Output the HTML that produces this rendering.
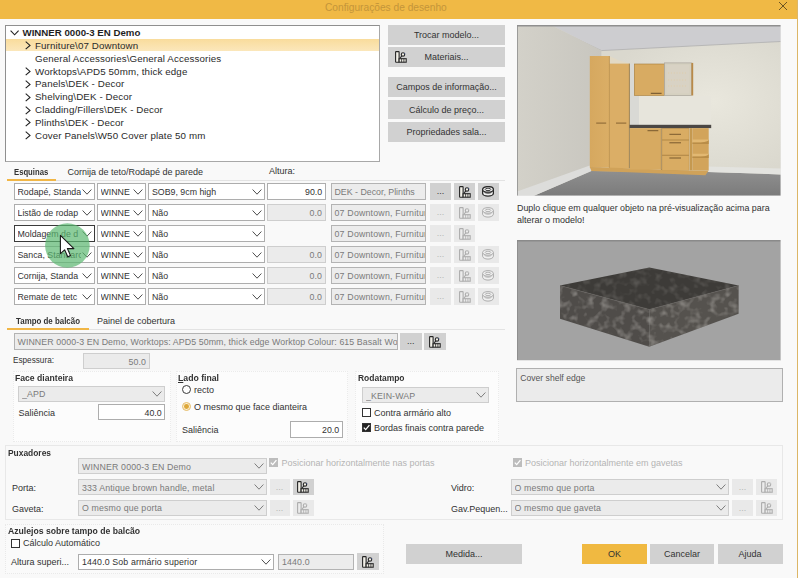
<!DOCTYPE html><html lang="pt"><head><meta charset="utf-8"><title>Configurações de desenho</title><style>
*{box-sizing:border-box;margin:0;padding:0}
html,body{width:798px;height:578px;overflow:hidden}
body{background:#f9f9f9;font-family:"Liberation Sans",sans-serif;font-size:9px;color:#323232;position:relative}
.a{position:absolute;white-space:nowrap}
.t{position:absolute;white-space:nowrap;line-height:12px;height:12px}
.b{font-weight:bold}
.g{color:#8a8a8a}
.btn{position:absolute;background:#d1d1d1;text-align:center;color:#333}
.btn.dis{background:#e9e9e9;color:#b5b5b5}
.btn.ok{background:#f0b941}
.cb{position:absolute;background:#fff;border:1px solid #adadad;overflow:hidden;white-space:nowrap}
.cb.dis{background:#ebebeb;border-color:#cecece;color:#7a7a7a}
.cb.ro{background:#ececec;border-color:#b3b3b3;color:#7a7a7a}
.cb.foc{border-color:#3a3a3a}
.cb.ls span{letter-spacing:0.2px}
.cb.ls2 span{letter-spacing:0.09px}
.cb.dis span{letter-spacing:0.14px}
.cb.w span{letter-spacing:0.14px}
.cb span{position:absolute;left:3px;top:0.8px;line-height:14px;font-size:8.8px}
.cb span.r{left:auto;right:2.4px}
.cb svg{position:absolute;right:2px}
.grp{position:absolute;background:#fcfcfc;border:1px dotted #ebebeb}
.chk{position:absolute;width:9px;height:9px;border:1px solid #333;background:#fff}
</style></head><body>
<div class="a" style="left:0;top:0;width:798px;height:18.5px;background:#f0b945"></div>
<div class="a" style="left:796.5px;top:0;width:1.5px;height:578px;background:#dcb667"></div>
<div class="t" style="left:325px;top:1.5px;font-size:10.2px;color:#c4953a">Configurações de desenho</div>
<svg class="a" style="left:778px;top:0.5px" width="10" height="10" viewBox="0 0 10 10"><path d="M1 1 L9 9 M9 1 L1 9" stroke="#5e4a1e" stroke-width="0.9" fill="none"/></svg>
<div class="a" style="left:5px;top:25px;width:375px;height:137px;background:#fff;border:1px solid #a8a8a8;border-top-color:#8f8f8f;border-left-color:#8f8f8f"></div>
<div class="a" style="left:6px;top:39.4px;width:373px;height:12px;background:linear-gradient(#f9dc9c,#fbe7bb)"></div>
<svg class="a" style="left:9.5px;top:29.8px" width="10" height="6" viewBox="0 0 10 6"><polyline points="0.6,0.6 4.6,4.8 8.6,0.6" fill="none" stroke="#222" stroke-width="1.1"/></svg>
<div class="t b" style="left:22.5px;top:27.0px;font-size:9.7px;color:#1f1f1f">WINNER 0000-3 EN Demo</div>
<svg class="a" style="left:24.5px;top:41.2px" width="6" height="9" viewBox="0 0 6 9"><polyline points="0.7,0.6 5,4.4 0.7,8.2" fill="none" stroke="#222" stroke-width="1.1"/></svg>
<div class="t " style="left:35px;top:39.9px;font-size:9.75px;color:#2a2a2a;letter-spacing:0.12px">Furniture\07 Downtown</div>
<div class="t " style="left:35px;top:52.7px;font-size:9.75px;color:#2a2a2a;letter-spacing:0.12px">General Accessories\General Accessories</div>
<svg class="a" style="left:24.5px;top:67.0px" width="6" height="9" viewBox="0 0 6 9"><polyline points="0.7,0.6 5,4.4 0.7,8.2" fill="none" stroke="#222" stroke-width="1.1"/></svg>
<div class="t " style="left:35px;top:65.6px;font-size:9.75px;color:#2a2a2a;letter-spacing:0.12px">Worktops\APD5 50mm, thick edge</div>
<svg class="a" style="left:24.5px;top:79.8px" width="6" height="9" viewBox="0 0 6 9"><polyline points="0.7,0.6 5,4.4 0.7,8.2" fill="none" stroke="#222" stroke-width="1.1"/></svg>
<div class="t " style="left:35px;top:78.4px;font-size:9.75px;color:#2a2a2a;letter-spacing:0.12px">Panels\DEK - Decor</div>
<svg class="a" style="left:24.5px;top:92.6px" width="6" height="9" viewBox="0 0 6 9"><polyline points="0.7,0.6 5,4.4 0.7,8.2" fill="none" stroke="#222" stroke-width="1.1"/></svg>
<div class="t " style="left:35px;top:91.2px;font-size:9.75px;color:#2a2a2a;letter-spacing:0.12px">Shelving\DEK - Decor</div>
<svg class="a" style="left:24.5px;top:105.5px" width="6" height="9" viewBox="0 0 6 9"><polyline points="0.7,0.6 5,4.4 0.7,8.2" fill="none" stroke="#222" stroke-width="1.1"/></svg>
<div class="t " style="left:35px;top:104.1px;font-size:9.75px;color:#2a2a2a;letter-spacing:0.12px">Cladding/Fillers\DEK - Decor</div>
<svg class="a" style="left:24.5px;top:118.4px" width="6" height="9" viewBox="0 0 6 9"><polyline points="0.7,0.6 5,4.4 0.7,8.2" fill="none" stroke="#222" stroke-width="1.1"/></svg>
<div class="t " style="left:35px;top:117.0px;font-size:9.75px;color:#2a2a2a;letter-spacing:0.12px">Plinths\DEK - Decor</div>
<svg class="a" style="left:24.5px;top:131.2px" width="6" height="9" viewBox="0 0 6 9"><polyline points="0.7,0.6 5,4.4 0.7,8.2" fill="none" stroke="#222" stroke-width="1.1"/></svg>
<div class="t " style="left:35px;top:129.8px;font-size:9.75px;color:#2a2a2a;letter-spacing:0.12px">Cover Panels\W50 Cover plate 50 mm</div>
<div class="btn " style="left:388px;top:25px;width:117px;height:19.5px;line-height:20.9px">Trocar modelo...</div>
<div class="btn " style="left:388px;top:47px;width:117px;height:19.5px;line-height:20.9px">Materiais...</div>
<svg class="a" style="left:394.5px;top:51px" width="12" height="12" viewBox="0 0 12 12"><rect x="0.6" y="0.6" width="3.5" height="10.6" rx="0.5" fill="#f2f0e8" stroke="#262626" stroke-width="1.1"/><rect x="4.1" y="7.7" width="7.1" height="3.5" fill="#f2f0e8" stroke="#262626" stroke-width="1.1"/><path d="M6.6 7.7 V11.2 M8.9 7.7 V11.2" stroke="#262626" stroke-width="0.8" fill="none"/><circle cx="8" cy="3.5" r="1.7" fill="#f2f0e8" stroke="#262626" stroke-width="1.1"/><path d="M6.9 4.9 L4.7 7.5" stroke="#262626" stroke-width="1.1" fill="none"/><circle cx="9.6" cy="2.6" r="0.7" fill="#3c4a78"/></svg>
<div class="btn " style="left:388px;top:77px;width:117px;height:19.5px;line-height:20.9px">Campos de informação...</div>
<div class="btn " style="left:388px;top:99.5px;width:117px;height:19.5px;line-height:20.9px">Cálculo de preço...</div>
<div class="btn " style="left:388px;top:122px;width:117px;height:19.5px;line-height:20.9px">Propriedades sala...</div>
<div class="t b" style="left:13.8px;top:166.4px;transform:scaleX(0.855);transform-origin:0 50%;">Esquinas</div>
<div class="t " style="left:67.5px;top:166.4px;">Cornija de teto/Rodapé de parede</div>
<div class="t " style="left:269px;top:164.9px;">Altura:</div>
<div class="a" style="left:55px;top:180px;width:450px;height:1px;background:#e3e3e3"></div>
<div class="a" style="left:7px;top:179px;width:48.5px;height:1.8px;background:#f1b646"></div>
<div class="cb " style="left:13.5px;top:183.4px;width:81.0px;height:16.2px"><span class="" style="line-height:14.2px;right:13px;overflow:hidden;">Rodapé, Standa</span><svg width="10" height="6" viewBox="0 0 10 6" style="top:4.5px"><polyline points="0.6,0.5 5,5.2 9.4,0.5" fill="none" stroke="#444" stroke-width="0.95"/></svg></div>
<div class="cb " style="left:96.5px;top:183.4px;width:49.0px;height:16.2px"><span class="" style="line-height:14.2px;right:13px;overflow:hidden;">WINNE</span><svg width="10" height="6" viewBox="0 0 10 6" style="top:4.5px"><polyline points="0.6,0.5 5,5.2 9.4,0.5" fill="none" stroke="#444" stroke-width="0.95"/></svg></div>
<div class="cb " style="left:148px;top:183.4px;width:116.5px;height:16.2px"><span class="" style="line-height:14.2px;right:13px;overflow:hidden;">SOB9, 9cm high</span><svg width="10" height="6" viewBox="0 0 10 6" style="top:4.5px"><polyline points="0.6,0.5 5,5.2 9.4,0.5" fill="none" stroke="#444" stroke-width="0.95"/></svg></div>
<div class="cb " style="left:266.5px;top:183.4px;width:59.0px;height:16.2px"><span class="r" style="line-height:14.2px;">90.0</span></div>
<div class="cb ro" style="left:330.5px;top:183.4px;width:95.0px;height:16.2px"><span class="" style="line-height:14.2px;">DEK - Decor, Plinths</span></div>
<div class="btn " style="left:430px;top:183.4px;width:21px;height:16.19999999999999px;line-height:17.6px">...</div>
<div class="btn " style="left:454px;top:183.4px;width:21px;height:16.19999999999999px"></div>
<svg class="a" style="left:458.7px;top:185.9px" width="12" height="12" viewBox="0 0 12 12"><rect x="0.6" y="0.6" width="3.5" height="10.6" rx="0.5" fill="#f2f0e8" stroke="#262626" stroke-width="1.1"/><rect x="4.1" y="7.7" width="7.1" height="3.5" fill="#f2f0e8" stroke="#262626" stroke-width="1.1"/><path d="M6.6 7.7 V11.2 M8.9 7.7 V11.2" stroke="#262626" stroke-width="0.8" fill="none"/><circle cx="8" cy="3.5" r="1.7" fill="#f2f0e8" stroke="#262626" stroke-width="1.1"/><path d="M6.9 4.9 L4.7 7.5" stroke="#262626" stroke-width="1.1" fill="none"/><circle cx="9.6" cy="2.6" r="0.7" fill="#3c4a78"/></svg>
<div class="btn " style="left:477.5px;top:183.4px;width:21.5px;height:16.19999999999999px"></div>
<svg class="a" style="left:482.2px;top:186.1px" width="12" height="11" viewBox="0 0 12 11"><path d="M0.6 3.4 V7.2 A5.4 2.9 0 0 0 11.4 7.2 V3.4" fill="#f0f0f0" stroke="#2a2a2a" stroke-width="1.3"/><ellipse cx="6" cy="3.4" rx="5.4" ry="2.8" fill="#f0f0f0" stroke="#2a2a2a" stroke-width="1.3"/><ellipse cx="6" cy="3.4" rx="2.8" ry="1.2" fill="none" stroke="#2a2a2a" stroke-width="0.9"/><path d="M2.4 6.1 A3.8 1.6 0 0 0 9.6 6.1" fill="none" stroke="#2a2a2a" stroke-width="0.9"/></svg>
<div class="cb " style="left:13.5px;top:204.4px;width:81.0px;height:16.2px"><span class="" style="line-height:14.2px;right:13px;overflow:hidden;">Listão de rodap</span><svg width="10" height="6" viewBox="0 0 10 6" style="top:4.5px"><polyline points="0.6,0.5 5,5.2 9.4,0.5" fill="none" stroke="#444" stroke-width="0.95"/></svg></div>
<div class="cb " style="left:96.5px;top:204.4px;width:49.0px;height:16.2px"><span class="" style="line-height:14.2px;right:13px;overflow:hidden;">WINNE</span><svg width="10" height="6" viewBox="0 0 10 6" style="top:4.5px"><polyline points="0.6,0.5 5,5.2 9.4,0.5" fill="none" stroke="#444" stroke-width="0.95"/></svg></div>
<div class="cb " style="left:148px;top:204.4px;width:116.5px;height:16.2px"><span class="" style="line-height:14.2px;right:13px;overflow:hidden;">Não</span><svg width="10" height="6" viewBox="0 0 10 6" style="top:4.5px"><polyline points="0.6,0.5 5,5.2 9.4,0.5" fill="none" stroke="#444" stroke-width="0.95"/></svg></div>
<div class="cb dis" style="left:266.5px;top:204.4px;width:59.0px;height:16.2px"><span class="r" style="line-height:14.2px;">0.0</span></div>
<div class="cb ro ls" style="left:330.5px;top:204.4px;width:95.0px;height:16.2px"><span class="" style="line-height:14.2px;">07 Downtown, Furniture</span></div>
<div class="btn dis" style="left:430px;top:204.4px;width:21px;height:16.19999999999999px;line-height:17.6px">...</div>
<div class="btn dis" style="left:454px;top:204.4px;width:21px;height:16.19999999999999px"></div>
<svg class="a" style="left:458.7px;top:206.9px" width="12" height="12" viewBox="0 0 12 12"><rect x="0.6" y="0.6" width="3.5" height="10.6" rx="0.5" fill="#ececec" stroke="#adadad" stroke-width="1.1"/><rect x="4.1" y="7.7" width="7.1" height="3.5" fill="#ececec" stroke="#adadad" stroke-width="1.1"/><path d="M6.6 7.7 V11.2 M8.9 7.7 V11.2" stroke="#adadad" stroke-width="0.8" fill="none"/><circle cx="8" cy="3.5" r="1.7" fill="#ececec" stroke="#adadad" stroke-width="1.1"/><path d="M6.9 4.9 L4.7 7.5" stroke="#adadad" stroke-width="1.1" fill="none"/><circle cx="9.6" cy="2.6" r="0.7" fill="#c4c4c4"/></svg>
<div class="btn dis" style="left:477.5px;top:204.4px;width:21.5px;height:16.19999999999999px"></div>
<svg class="a" style="left:482.2px;top:207.1px" width="12" height="11" viewBox="0 0 12 11"><path d="M0.6 3.4 V7.2 A5.4 2.9 0 0 0 11.4 7.2 V3.4" fill="#f0f0f0" stroke="#adadad" stroke-width="1"/><ellipse cx="6" cy="3.4" rx="5.4" ry="2.8" fill="#f0f0f0" stroke="#adadad" stroke-width="1"/><ellipse cx="6" cy="3.4" rx="2.8" ry="1.2" fill="none" stroke="#adadad" stroke-width="0.9"/><path d="M2.4 6.1 A3.8 1.6 0 0 0 9.6 6.1" fill="none" stroke="#adadad" stroke-width="0.9"/></svg>
<div class="cb foc" style="left:13.5px;top:225.4px;width:81.0px;height:16.2px"><span class="" style="line-height:14.2px;right:13px;overflow:hidden;">Moldagem de d</span><svg width="10" height="6" viewBox="0 0 10 6" style="top:4.5px"><polyline points="0.6,0.5 5,5.2 9.4,0.5" fill="none" stroke="#444" stroke-width="0.95"/></svg></div>
<div class="cb " style="left:96.5px;top:225.4px;width:49.0px;height:16.2px"><span class="" style="line-height:14.2px;right:13px;overflow:hidden;">WINNE</span><svg width="10" height="6" viewBox="0 0 10 6" style="top:4.5px"><polyline points="0.6,0.5 5,5.2 9.4,0.5" fill="none" stroke="#444" stroke-width="0.95"/></svg></div>
<div class="cb " style="left:148px;top:225.4px;width:116.5px;height:16.2px"><span class="" style="line-height:14.2px;right:13px;overflow:hidden;">Não</span><svg width="10" height="6" viewBox="0 0 10 6" style="top:4.5px"><polyline points="0.6,0.5 5,5.2 9.4,0.5" fill="none" stroke="#444" stroke-width="0.95"/></svg></div>
<div class="cb ro ls" style="left:330.5px;top:225.4px;width:95.0px;height:16.2px"><span class="" style="line-height:14.2px;">07 Downtown, Furniture</span></div>
<div class="btn dis" style="left:430px;top:225.4px;width:21px;height:16.19999999999999px;line-height:17.6px">...</div>
<div class="btn dis" style="left:454px;top:225.4px;width:21px;height:16.19999999999999px"></div>
<svg class="a" style="left:458.7px;top:227.9px" width="12" height="12" viewBox="0 0 12 12"><rect x="0.6" y="0.6" width="3.5" height="10.6" rx="0.5" fill="#ececec" stroke="#adadad" stroke-width="1.1"/><rect x="4.1" y="7.7" width="7.1" height="3.5" fill="#ececec" stroke="#adadad" stroke-width="1.1"/><path d="M6.6 7.7 V11.2 M8.9 7.7 V11.2" stroke="#adadad" stroke-width="0.8" fill="none"/><circle cx="8" cy="3.5" r="1.7" fill="#ececec" stroke="#adadad" stroke-width="1.1"/><path d="M6.9 4.9 L4.7 7.5" stroke="#adadad" stroke-width="1.1" fill="none"/><circle cx="9.6" cy="2.6" r="0.7" fill="#c4c4c4"/></svg>
<div class="cb " style="left:13.5px;top:246.4px;width:81.0px;height:16.2px"><span class="" style="line-height:14.2px;right:13px;overflow:hidden;">Sanca, Standarc</span><svg width="10" height="6" viewBox="0 0 10 6" style="top:4.5px"><polyline points="0.6,0.5 5,5.2 9.4,0.5" fill="none" stroke="#444" stroke-width="0.95"/></svg></div>
<div class="cb " style="left:96.5px;top:246.4px;width:49.0px;height:16.2px"><span class="" style="line-height:14.2px;right:13px;overflow:hidden;">WINNE</span><svg width="10" height="6" viewBox="0 0 10 6" style="top:4.5px"><polyline points="0.6,0.5 5,5.2 9.4,0.5" fill="none" stroke="#444" stroke-width="0.95"/></svg></div>
<div class="cb " style="left:148px;top:246.4px;width:116.5px;height:16.2px"><span class="" style="line-height:14.2px;right:13px;overflow:hidden;">Não</span><svg width="10" height="6" viewBox="0 0 10 6" style="top:4.5px"><polyline points="0.6,0.5 5,5.2 9.4,0.5" fill="none" stroke="#444" stroke-width="0.95"/></svg></div>
<div class="cb dis" style="left:266.5px;top:246.4px;width:59.0px;height:16.2px"><span class="r" style="line-height:14.2px;">0.0</span></div>
<div class="cb ro ls" style="left:330.5px;top:246.4px;width:95.0px;height:16.2px"><span class="" style="line-height:14.2px;">07 Downtown, Furniture</span></div>
<div class="btn dis" style="left:430px;top:246.4px;width:21px;height:16.200000000000017px;line-height:17.6px">...</div>
<div class="btn dis" style="left:454px;top:246.4px;width:21px;height:16.200000000000017px"></div>
<svg class="a" style="left:458.7px;top:248.9px" width="12" height="12" viewBox="0 0 12 12"><rect x="0.6" y="0.6" width="3.5" height="10.6" rx="0.5" fill="#ececec" stroke="#adadad" stroke-width="1.1"/><rect x="4.1" y="7.7" width="7.1" height="3.5" fill="#ececec" stroke="#adadad" stroke-width="1.1"/><path d="M6.6 7.7 V11.2 M8.9 7.7 V11.2" stroke="#adadad" stroke-width="0.8" fill="none"/><circle cx="8" cy="3.5" r="1.7" fill="#ececec" stroke="#adadad" stroke-width="1.1"/><path d="M6.9 4.9 L4.7 7.5" stroke="#adadad" stroke-width="1.1" fill="none"/><circle cx="9.6" cy="2.6" r="0.7" fill="#c4c4c4"/></svg>
<div class="btn dis" style="left:477.5px;top:246.4px;width:21.5px;height:16.200000000000017px"></div>
<svg class="a" style="left:482.2px;top:249.1px" width="12" height="11" viewBox="0 0 12 11"><path d="M0.6 3.4 V7.2 A5.4 2.9 0 0 0 11.4 7.2 V3.4" fill="#f0f0f0" stroke="#adadad" stroke-width="1"/><ellipse cx="6" cy="3.4" rx="5.4" ry="2.8" fill="#f0f0f0" stroke="#adadad" stroke-width="1"/><ellipse cx="6" cy="3.4" rx="2.8" ry="1.2" fill="none" stroke="#adadad" stroke-width="0.9"/><path d="M2.4 6.1 A3.8 1.6 0 0 0 9.6 6.1" fill="none" stroke="#adadad" stroke-width="0.9"/></svg>
<div class="cb " style="left:13.5px;top:267.4px;width:81.0px;height:16.2px"><span class="" style="line-height:14.2px;right:13px;overflow:hidden;">Cornija, Standa</span><svg width="10" height="6" viewBox="0 0 10 6" style="top:4.5px"><polyline points="0.6,0.5 5,5.2 9.4,0.5" fill="none" stroke="#444" stroke-width="0.95"/></svg></div>
<div class="cb " style="left:96.5px;top:267.4px;width:49.0px;height:16.2px"><span class="" style="line-height:14.2px;right:13px;overflow:hidden;">WINNE</span><svg width="10" height="6" viewBox="0 0 10 6" style="top:4.5px"><polyline points="0.6,0.5 5,5.2 9.4,0.5" fill="none" stroke="#444" stroke-width="0.95"/></svg></div>
<div class="cb " style="left:148px;top:267.4px;width:116.5px;height:16.2px"><span class="" style="line-height:14.2px;right:13px;overflow:hidden;">Não</span><svg width="10" height="6" viewBox="0 0 10 6" style="top:4.5px"><polyline points="0.6,0.5 5,5.2 9.4,0.5" fill="none" stroke="#444" stroke-width="0.95"/></svg></div>
<div class="cb dis" style="left:266.5px;top:267.4px;width:59.0px;height:16.2px"><span class="r" style="line-height:14.2px;">0.0</span></div>
<div class="cb ro ls" style="left:330.5px;top:267.4px;width:95.0px;height:16.2px"><span class="" style="line-height:14.2px;">07 Downtown, Furniture</span></div>
<div class="btn dis" style="left:430px;top:267.4px;width:21px;height:16.19999999999999px;line-height:17.6px">...</div>
<div class="btn dis" style="left:454px;top:267.4px;width:21px;height:16.19999999999999px"></div>
<svg class="a" style="left:458.7px;top:269.9px" width="12" height="12" viewBox="0 0 12 12"><rect x="0.6" y="0.6" width="3.5" height="10.6" rx="0.5" fill="#ececec" stroke="#adadad" stroke-width="1.1"/><rect x="4.1" y="7.7" width="7.1" height="3.5" fill="#ececec" stroke="#adadad" stroke-width="1.1"/><path d="M6.6 7.7 V11.2 M8.9 7.7 V11.2" stroke="#adadad" stroke-width="0.8" fill="none"/><circle cx="8" cy="3.5" r="1.7" fill="#ececec" stroke="#adadad" stroke-width="1.1"/><path d="M6.9 4.9 L4.7 7.5" stroke="#adadad" stroke-width="1.1" fill="none"/><circle cx="9.6" cy="2.6" r="0.7" fill="#c4c4c4"/></svg>
<div class="btn dis" style="left:477.5px;top:267.4px;width:21.5px;height:16.19999999999999px"></div>
<svg class="a" style="left:482.2px;top:270.1px" width="12" height="11" viewBox="0 0 12 11"><path d="M0.6 3.4 V7.2 A5.4 2.9 0 0 0 11.4 7.2 V3.4" fill="#f0f0f0" stroke="#adadad" stroke-width="1"/><ellipse cx="6" cy="3.4" rx="5.4" ry="2.8" fill="#f0f0f0" stroke="#adadad" stroke-width="1"/><ellipse cx="6" cy="3.4" rx="2.8" ry="1.2" fill="none" stroke="#adadad" stroke-width="0.9"/><path d="M2.4 6.1 A3.8 1.6 0 0 0 9.6 6.1" fill="none" stroke="#adadad" stroke-width="0.9"/></svg>
<div class="cb " style="left:13.5px;top:288.4px;width:81.0px;height:16.2px"><span class="" style="line-height:14.2px;right:13px;overflow:hidden;">Remate de tetc</span><svg width="10" height="6" viewBox="0 0 10 6" style="top:4.5px"><polyline points="0.6,0.5 5,5.2 9.4,0.5" fill="none" stroke="#444" stroke-width="0.95"/></svg></div>
<div class="cb " style="left:96.5px;top:288.4px;width:49.0px;height:16.2px"><span class="" style="line-height:14.2px;right:13px;overflow:hidden;">WINNE</span><svg width="10" height="6" viewBox="0 0 10 6" style="top:4.5px"><polyline points="0.6,0.5 5,5.2 9.4,0.5" fill="none" stroke="#444" stroke-width="0.95"/></svg></div>
<div class="cb " style="left:148px;top:288.4px;width:116.5px;height:16.2px"><span class="" style="line-height:14.2px;right:13px;overflow:hidden;">Não</span><svg width="10" height="6" viewBox="0 0 10 6" style="top:4.5px"><polyline points="0.6,0.5 5,5.2 9.4,0.5" fill="none" stroke="#444" stroke-width="0.95"/></svg></div>
<div class="cb dis" style="left:266.5px;top:288.4px;width:59.0px;height:16.2px"><span class="r" style="line-height:14.2px;">0.0</span></div>
<div class="cb ro ls" style="left:330.5px;top:288.4px;width:95.0px;height:16.2px"><span class="" style="line-height:14.2px;">07 Downtown, Furniture</span></div>
<div class="btn dis" style="left:430px;top:288.4px;width:21px;height:16.19999999999999px;line-height:17.6px">...</div>
<div class="btn dis" style="left:454px;top:288.4px;width:21px;height:16.19999999999999px"></div>
<svg class="a" style="left:458.7px;top:290.9px" width="12" height="12" viewBox="0 0 12 12"><rect x="0.6" y="0.6" width="3.5" height="10.6" rx="0.5" fill="#ececec" stroke="#adadad" stroke-width="1.1"/><rect x="4.1" y="7.7" width="7.1" height="3.5" fill="#ececec" stroke="#adadad" stroke-width="1.1"/><path d="M6.6 7.7 V11.2 M8.9 7.7 V11.2" stroke="#adadad" stroke-width="0.8" fill="none"/><circle cx="8" cy="3.5" r="1.7" fill="#ececec" stroke="#adadad" stroke-width="1.1"/><path d="M6.9 4.9 L4.7 7.5" stroke="#adadad" stroke-width="1.1" fill="none"/><circle cx="9.6" cy="2.6" r="0.7" fill="#c4c4c4"/></svg>
<div class="btn dis" style="left:477.5px;top:288.4px;width:21.5px;height:16.19999999999999px"></div>
<svg class="a" style="left:482.2px;top:291.1px" width="12" height="11" viewBox="0 0 12 11"><path d="M0.6 3.4 V7.2 A5.4 2.9 0 0 0 11.4 7.2 V3.4" fill="#f0f0f0" stroke="#adadad" stroke-width="1"/><ellipse cx="6" cy="3.4" rx="5.4" ry="2.8" fill="#f0f0f0" stroke="#adadad" stroke-width="1"/><ellipse cx="6" cy="3.4" rx="2.8" ry="1.2" fill="none" stroke="#adadad" stroke-width="0.9"/><path d="M2.4 6.1 A3.8 1.6 0 0 0 9.6 6.1" fill="none" stroke="#adadad" stroke-width="0.9"/></svg>
<div class="t b" style="left:15.5px;top:315.4px;transform:scaleX(0.878);transform-origin:0 50%;">Tampo de balcão</div>
<div class="t " style="left:97px;top:315.4px;">Painel de cobertura</div>
<div class="a" style="left:88px;top:329px;width:417px;height:1px;background:#e3e3e3"></div>
<div class="a" style="left:7px;top:328px;width:81.5px;height:1.8px;background:#f1b646"></div>
<div class="cb ro ls2" style="left:13.5px;top:333px;width:384.5px;height:16.5px"><span class="" style="line-height:14.5px;">WINNER 0000-3 EN Demo, Worktops: APD5 50mm, thick edge Worktop Colour: 615 Basalt Worktop</span></div>
<div class="btn " style="left:400px;top:333px;width:21.69999999999999px;height:16.5px;line-height:17.9px">...</div>
<div class="btn " style="left:424px;top:333px;width:21.80000000000001px;height:16.5px"></div>
<svg class="a" style="left:429.1px;top:335.6px" width="12" height="12" viewBox="0 0 12 12"><rect x="0.6" y="0.6" width="3.5" height="10.6" rx="0.5" fill="#f2f0e8" stroke="#262626" stroke-width="1.1"/><rect x="4.1" y="7.7" width="7.1" height="3.5" fill="#f2f0e8" stroke="#262626" stroke-width="1.1"/><path d="M6.6 7.7 V11.2 M8.9 7.7 V11.2" stroke="#262626" stroke-width="0.8" fill="none"/><circle cx="8" cy="3.5" r="1.7" fill="#f2f0e8" stroke="#262626" stroke-width="1.1"/><path d="M6.9 4.9 L4.7 7.5" stroke="#262626" stroke-width="1.1" fill="none"/><circle cx="9.6" cy="2.6" r="0.7" fill="#3c4a78"/></svg>
<div class="t " style="left:13px;top:355.0px;font-size:8.2px">Espessura:</div>
<div class="cb dis" style="left:83px;top:353px;width:66.5px;height:16px"><span class="r" style="line-height:14px;">50.0</span></div>
<div class="grp" style="left:13px;top:371px;width:157.5px;height:70.5px"></div>
<div class="grp" style="left:176px;top:371px;width:171.5px;height:70.5px"></div>
<div class="grp" style="left:354.5px;top:371px;width:144px;height:70.5px"></div>
<div class="t b" style="left:14.5px;top:372.4px;transform:scaleX(0.958);transform-origin:0 50%;">Face dianteira</div>
<div class="cb dis" style="left:18px;top:385.5px;width:146.5px;height:16.0px"><span class="" style="line-height:14.0px;right:13px;overflow:hidden;">_APD</span><svg width="10" height="6" viewBox="0 0 10 6" style="top:4.4px"><polyline points="0.6,0.5 5,5.2 9.4,0.5" fill="none" stroke="#777" stroke-width="0.95"/></svg></div>
<div class="t " style="left:18.5px;top:407.4px;">Saliência</div>
<div class="cb " style="left:98px;top:404px;width:67px;height:16px"><span class="r" style="line-height:14px;">40.0</span></div>
<div class="t b" style="left:178px;top:372.4px;transform:scaleX(0.965);transform-origin:0 50%"><span style="text-decoration:underline">L</span>ado final</div>
<div class="a" style="left:181.6px;top:384.8px;width:9.6px;height:9.6px;border:1px solid #3a3a3a;border-radius:50%;background:#fff"></div>
<div class="t " style="left:194px;top:383.9px;">recto</div>
<div class="a" style="left:181.6px;top:401.8px;width:9.6px;height:9.6px;border:1px solid #e6bd6a;border-radius:50%;background:#fcefd3"></div>
<div class="a" style="left:184px;top:404.2px;width:4.8px;height:4.8px;border-radius:50%;background:#dda83a"></div>
<div class="t " style="left:194px;top:400.9px;">O mesmo que face dianteira</div>
<div class="t " style="left:182px;top:423.9px;">Saliência</div>
<div class="cb " style="left:289.5px;top:421px;width:53.0px;height:16.5px"><span class="r" style="line-height:14.5px;">20.0</span></div>
<div class="t b" style="left:357.5px;top:372.4px;transform:scaleX(0.94);transform-origin:0 50%;">Rodatampo</div>
<div class="cb dis" style="left:362px;top:387px;width:126.5px;height:16px"><span class="" style="line-height:14px;right:13px;overflow:hidden;">_KEIN-WAP</span><svg width="10" height="6" viewBox="0 0 10 6" style="top:4.4px"><polyline points="0.6,0.5 5,5.2 9.4,0.5" fill="none" stroke="#777" stroke-width="0.95"/></svg></div>
<div class="chk" style="left:362px;top:408px"></div>
<div class="t " style="left:374px;top:406.9px;">Contra armário alto</div>
<div class="chk" style="left:362px;top:423px;background:#222"></div>
<svg class="a" style="left:362px;top:423px" width="9" height="9" viewBox="0 0 9 9"><polyline points="1.8,4.6 3.7,6.6 7.4,2.2" fill="none" stroke="#fff" stroke-width="1.3"/></svg>
<div class="t " style="left:374px;top:422.2px;">Bordas finais contra parede</div>
<div class="a" style="left:516px;top:367.8px;width:267px;height:34px;background:#ebebeb;border:1px solid #b0b0b0"></div>
<div class="t " style="left:520.3px;top:372.0px;color:#555;font-size:8.6px">Cover shelf edge</div>
<div class="a" style="left:5px;top:444.5px;width:777.5px;height:75.5px;border:1px solid #e8e8e8;background:#f9f9f9"></div>
<div class="t b" style="left:7.5px;top:446.9px;transform:scaleX(0.934);transform-origin:0 50%;">Puxadores</div>
<div class="cb dis" style="left:78px;top:458px;width:188.5px;height:16px"><span class="" style="line-height:14px;right:13px;overflow:hidden;">WINNER 0000-3 EN Demo</span><svg width="10" height="6" viewBox="0 0 10 6" style="top:4.4px"><polyline points="0.6,0.5 5,5.2 9.4,0.5" fill="none" stroke="#777" stroke-width="0.95"/></svg></div>
<div class="a" style="left:269px;top:458px;width:9px;height:9px;background:#bdbdbd"></div>
<svg class="a" style="left:269px;top:458px" width="9" height="9" viewBox="0 0 9 9"><polyline points="1.8,4.6 3.7,6.6 7.4,2.2" fill="none" stroke="#fff" stroke-width="1.3"/></svg>
<div class="t " style="left:281.5px;top:456.9px;color:#b4b4b4">Posicionar horizontalmente nas portas</div>
<div class="a" style="left:512.5px;top:458px;width:9px;height:9px;background:#bdbdbd"></div>
<svg class="a" style="left:512.5px;top:458px" width="9" height="9" viewBox="0 0 9 9"><polyline points="1.8,4.6 3.7,6.6 7.4,2.2" fill="none" stroke="#fff" stroke-width="1.3"/></svg>
<div class="t " style="left:525px;top:456.9px;color:#b4b4b4">Posicionar horizontalmente em gavetas</div>
<div class="t " style="left:12px;top:482.4px;">Porta:</div>
<div class="cb dis" style="left:78px;top:479px;width:188.5px;height:16px"><span class="" style="line-height:14px;right:13px;overflow:hidden;">333 Antique brown handle, metal</span><svg width="10" height="6" viewBox="0 0 10 6" style="top:4.4px"><polyline points="0.6,0.5 5,5.2 9.4,0.5" fill="none" stroke="#777" stroke-width="0.95"/></svg></div>
<div class="btn dis" style="left:269.5px;top:479px;width:20.0px;height:16px;line-height:17.4px">...</div>
<div class="btn " style="left:292.5px;top:479px;width:21.5px;height:16px"></div>
<svg class="a" style="left:297.4px;top:481.4px" width="12" height="12" viewBox="0 0 12 12"><rect x="0.6" y="0.6" width="3.5" height="10.6" rx="0.5" fill="#f2f0e8" stroke="#262626" stroke-width="1.1"/><rect x="4.1" y="7.7" width="7.1" height="3.5" fill="#f2f0e8" stroke="#262626" stroke-width="1.1"/><path d="M6.6 7.7 V11.2 M8.9 7.7 V11.2" stroke="#262626" stroke-width="0.8" fill="none"/><circle cx="8" cy="3.5" r="1.7" fill="#f2f0e8" stroke="#262626" stroke-width="1.1"/><path d="M6.9 4.9 L4.7 7.5" stroke="#262626" stroke-width="1.1" fill="none"/><circle cx="9.6" cy="2.6" r="0.7" fill="#3c4a78"/></svg>
<div class="t " style="left:12px;top:502.9px;">Gaveta:</div>
<div class="cb dis" style="left:78px;top:499.5px;width:188.5px;height:16.0px"><span class="" style="line-height:14.0px;right:13px;overflow:hidden;">O mesmo que porta</span><svg width="10" height="6" viewBox="0 0 10 6" style="top:4.4px"><polyline points="0.6,0.5 5,5.2 9.4,0.5" fill="none" stroke="#777" stroke-width="0.95"/></svg></div>
<div class="btn dis" style="left:269.5px;top:499.5px;width:20.0px;height:16.0px;line-height:17.4px">...</div>
<div class="btn dis" style="left:292.5px;top:499.5px;width:21.5px;height:16.0px"></div>
<svg class="a" style="left:297.4px;top:501.9px" width="12" height="12" viewBox="0 0 12 12"><rect x="0.6" y="0.6" width="3.5" height="10.6" rx="0.5" fill="#ececec" stroke="#adadad" stroke-width="1.1"/><rect x="4.1" y="7.7" width="7.1" height="3.5" fill="#ececec" stroke="#adadad" stroke-width="1.1"/><path d="M6.6 7.7 V11.2 M8.9 7.7 V11.2" stroke="#adadad" stroke-width="0.8" fill="none"/><circle cx="8" cy="3.5" r="1.7" fill="#ececec" stroke="#adadad" stroke-width="1.1"/><path d="M6.9 4.9 L4.7 7.5" stroke="#adadad" stroke-width="1.1" fill="none"/><circle cx="9.6" cy="2.6" r="0.7" fill="#c4c4c4"/></svg>
<div class="t " style="left:451px;top:482.4px;">Vidro:</div>
<div class="cb dis" style="left:510.5px;top:479px;width:218.2px;height:16px"><span class="" style="line-height:14px;right:13px;overflow:hidden;">O mesmo que porta</span><svg width="10" height="6" viewBox="0 0 10 6" style="top:4.4px"><polyline points="0.6,0.5 5,5.2 9.4,0.5" fill="none" stroke="#777" stroke-width="0.95"/></svg></div>
<div class="btn dis" style="left:732px;top:479px;width:20.799999999999955px;height:16px;line-height:17.4px">...</div>
<div class="btn dis" style="left:756px;top:479px;width:20.799999999999955px;height:16px"></div>
<svg class="a" style="left:760.6px;top:481.4px" width="12" height="12" viewBox="0 0 12 12"><rect x="0.6" y="0.6" width="3.5" height="10.6" rx="0.5" fill="#ececec" stroke="#adadad" stroke-width="1.1"/><rect x="4.1" y="7.7" width="7.1" height="3.5" fill="#ececec" stroke="#adadad" stroke-width="1.1"/><path d="M6.6 7.7 V11.2 M8.9 7.7 V11.2" stroke="#adadad" stroke-width="0.8" fill="none"/><circle cx="8" cy="3.5" r="1.7" fill="#ececec" stroke="#adadad" stroke-width="1.1"/><path d="M6.9 4.9 L4.7 7.5" stroke="#adadad" stroke-width="1.1" fill="none"/><circle cx="9.6" cy="2.6" r="0.7" fill="#c4c4c4"/></svg>
<div class="t " style="left:451px;top:502.9px;">Gav.Pequen...</div>
<div class="cb dis" style="left:510.5px;top:499.7px;width:218.2px;height:16.0px"><span class="" style="line-height:14.0px;right:13px;overflow:hidden;">O mesmo que gaveta</span><svg width="10" height="6" viewBox="0 0 10 6" style="top:4.4px"><polyline points="0.6,0.5 5,5.2 9.4,0.5" fill="none" stroke="#777" stroke-width="0.95"/></svg></div>
<div class="btn dis" style="left:732px;top:499.7px;width:20.799999999999955px;height:16.000000000000057px;line-height:17.4px">...</div>
<div class="btn dis" style="left:756px;top:499.7px;width:20.799999999999955px;height:16.000000000000057px"></div>
<svg class="a" style="left:760.6px;top:502.1px" width="12" height="12" viewBox="0 0 12 12"><rect x="0.6" y="0.6" width="3.5" height="10.6" rx="0.5" fill="#ececec" stroke="#adadad" stroke-width="1.1"/><rect x="4.1" y="7.7" width="7.1" height="3.5" fill="#ececec" stroke="#adadad" stroke-width="1.1"/><path d="M6.6 7.7 V11.2 M8.9 7.7 V11.2" stroke="#adadad" stroke-width="0.8" fill="none"/><circle cx="8" cy="3.5" r="1.7" fill="#ececec" stroke="#adadad" stroke-width="1.1"/><path d="M6.9 4.9 L4.7 7.5" stroke="#adadad" stroke-width="1.1" fill="none"/><circle cx="9.6" cy="2.6" r="0.7" fill="#c4c4c4"/></svg>
<div class="a" style="left:5px;top:523.5px;width:379px;height:50px;border:1px dotted #e9e9e9;background:#fafafa"></div>
<div class="t b" style="left:7.5px;top:524.9px;transform:scaleX(0.96);transform-origin:0 50%;">Azulejos sobre tampo de balcão</div>
<div class="chk" style="left:11px;top:538.5px"></div>
<div class="t " style="left:23px;top:536.9px;">Cálculo Automático</div>
<div class="t " style="left:11px;top:556.4px;">Altura superi...</div>
<div class="cb w" style="left:78px;top:553.5px;width:196px;height:16.0px"><span class="" style="line-height:14.0px;right:13px;overflow:hidden;">1440.0 Sob armário superior</span><svg width="10" height="6" viewBox="0 0 10 6" style="top:4.4px"><polyline points="0.6,0.5 5,5.2 9.4,0.5" fill="none" stroke="#444" stroke-width="0.95"/></svg></div>
<div class="cb ro w" style="left:278px;top:553.5px;width:76px;height:16.0px"><span class="" style="line-height:14.0px;">1440.0</span></div>
<div class="btn " style="left:357px;top:553px;width:21.5px;height:16.5px"></div>
<svg class="a" style="left:361.9px;top:555.6px" width="12" height="12" viewBox="0 0 12 12"><rect x="0.6" y="0.6" width="3.5" height="10.6" rx="0.5" fill="#f2f0e8" stroke="#262626" stroke-width="1.1"/><rect x="4.1" y="7.7" width="7.1" height="3.5" fill="#f2f0e8" stroke="#262626" stroke-width="1.1"/><path d="M6.6 7.7 V11.2 M8.9 7.7 V11.2" stroke="#262626" stroke-width="0.8" fill="none"/><circle cx="8" cy="3.5" r="1.7" fill="#f2f0e8" stroke="#262626" stroke-width="1.1"/><path d="M6.9 4.9 L4.7 7.5" stroke="#262626" stroke-width="1.1" fill="none"/><circle cx="9.6" cy="2.6" r="0.7" fill="#3c4a78"/></svg>
<div class="btn " style="left:406px;top:544px;width:116px;height:19.5px;line-height:20.9px">Medida...</div>
<div class="btn ok" style="left:582px;top:544px;width:65px;height:19.5px;line-height:20.9px">OK</div>
<div class="btn " style="left:650px;top:544px;width:64px;height:19.5px;line-height:20.9px">Cancelar</div>
<div class="btn " style="left:717.5px;top:544px;width:65.0px;height:19.5px;line-height:20.9px">Ajuda</div>
<svg class="a" style="left:517px;top:25px" width="264" height="171" viewBox="0 0 264 171">
<defs>
<linearGradient id="lw" x1="0" x2="1" y1="0" y2="0"><stop offset="0" stop-color="#d3d1c9"/><stop offset="1" stop-color="#c8c6bf"/></linearGradient>
<radialGradient id="bw" cx="0.62" cy="0.45" r="0.6"><stop offset="0" stop-color="#e9e7dd"/><stop offset="1" stop-color="#dad8ce"/></radialGradient>
<linearGradient id="fl" x1="0" x2="0" y1="0" y2="1"><stop offset="0" stop-color="#8f8f8f"/><stop offset="1" stop-color="#7b7b7b"/></linearGradient>
<linearGradient id="wd" x1="0" x2="1" y1="0" y2="0"><stop offset="0" stop-color="#d6a85f"/><stop offset="1" stop-color="#dbae66"/></linearGradient>
</defs>
<rect width="264" height="171" fill="#dcdad0"/>
<!-- back wall -->
<polygon points="84.4,25.6 264,16.5 264,150 84.4,146" fill="url(#bw)"/>
<!-- ceiling -->
<polygon points="34,0 264,0 264,16.5 84.4,25.6" fill="#cdcdd0"/>
<polyline points="34,1.5 84.4,25.6 264,16.5" fill="none" stroke="#a9a9aa" stroke-width="0.7"/>
<!-- left wall -->
<polygon points="0,0 34,0 84.4,25.6 84.4,146 0,171" fill="url(#lw)"/>
<!-- floor -->
<polygon points="16.5,171 74.4,145.9 191,147 264,149.4 264,171" fill="url(#fl)"/>
<!-- baseboards -->
<polygon points="0,166.6 72.8,140.4 74.4,145.9 16.5,171 0,171" fill="#dddddb"/>
<polygon points="191,141.4 264,143.5 264,149.4 191,147" fill="#e3e3df"/>
<!-- light strip beside tall cab -->
<rect x="112.3" y="38.6" width="9.7" height="61.4" fill="#d9d9d5"/>
<rect x="122" y="70.5" width="72" height="29.5" fill="#e7e5dc"/>
<!-- tall cabinets -->
<polygon points="92.3,31 102,35.5 112.3,38.6 92.3,38.6" fill="#e2d9c4"/>
<rect x="72.8" y="31" width="19.6" height="111.5" fill="url(#wd)"/>
<rect x="92.4" y="38.6" width="19.9" height="104.6" fill="#dbae66"/>
<line x1="92.4" y1="31" x2="92.4" y2="143" stroke="#b88a40" stroke-width="0.7"/>
<line x1="112.4" y1="38.6" x2="112.4" y2="143.4" stroke="#8f7240" stroke-width="0.8"/>
<line x1="79.2" y1="98.1" x2="89.2" y2="98.1" stroke="#7d5a2c" stroke-width="0.9"/>
<line x1="99" y1="98.1" x2="109.3" y2="98.1" stroke="#7d5a2c" stroke-width="0.9"/>
<!-- plinth -->
<polygon points="72.8,142 112.3,143.2 144,144.5 172,145.4 191.7,145.4 188.4,150.3 150,148.8 112,147.2 74.4,146" fill="#d0a259"/>
<!-- wall cabinet -->
<rect x="117.3" y="39" width="30.1" height="31.5" fill="#d8ab62" stroke="#a77c3a" stroke-width="0.6"/>
<rect x="147.4" y="37.9" width="27" height="32.6" fill="#d5d0c0" stroke="#a9a49a" stroke-width="0.7"/>
<rect x="149.4" y="40" width="23" height="28.4" fill="#d8d2c4"/>
<path d="M151 48h19M151 55h19M151 61h19" stroke="#dccfb6" stroke-width="2.2" stroke-dasharray="1.2 1.6" opacity="0.8"/>
<rect x="174.4" y="37.9" width="1.8" height="32.6" fill="#b98a48"/>
<line x1="133.8" y1="68.3" x2="144.6" y2="68.3" stroke="#5c4424" stroke-width="0.9"/>
<!-- worktop -->
<rect x="112.6" y="99.8" width="81.6" height="3.3" fill="#4b4744"/>
<!-- base door -->
<rect x="113" y="103.1" width="31" height="41.4" fill="#d7aa61"/>
<line x1="144.4" y1="103.1" x2="144.4" y2="145" stroke="#a0783a" stroke-width="0.8"/>
<line x1="130.5" y1="105.7" x2="141.3" y2="105.7" stroke="#6e5028" stroke-width="0.9"/>
<!-- drawers -->
<rect x="145" y="103.1" width="27" height="42.3" fill="#b88e4c"/>
<rect x="145.2" y="104" width="26.6" height="10.4" fill="#d9ac63"/>
<rect x="145.2" y="115.6" width="26.6" height="14.1" fill="#d9ac63"/>
<rect x="145.2" y="131" width="26.6" height="14.4" fill="#d9ac63"/>
<path d="M152.4 109.3h11.6M152.4 117.8h11.6M152.4 133h11.6" stroke="#6e5028" stroke-width="0.9"/>
<!-- end shelf -->
<rect x="172.4" y="103.1" width="3" height="42.3" fill="#c59950"/>
<path d="M175.4 103.1 H191.7 V145.4 H175.4 Z" fill="#d2a45b"/>
<path d="M175.4 114.6 H191.7 Q191.7 117.2 184 117.4 H175.4 Z M175.4 128.8 H191.7 Q191.7 131.4 184 131.6 H175.4 Z" fill="#e2b872"/>
<path d="M175.4 117.4 H184 Q191.7 117.2 191.7 114.6 V119 H175.4 Z M175.4 131.6 H184 Q191.7 131.4 191.7 128.8 V133 H175.4 Z" fill="#b98d48"/>
<!-- sunken border -->
<path d="M0 171 V0.6 H264" fill="none" stroke="#8f8f8f" stroke-width="1.6"/>
<path d="M264 0 V171 H0" fill="none" stroke="#e9e9e9" stroke-width="1"/>
</svg>

<div class="t " style="left:517px;top:202.4px;font-size:8.88px">Duplo clique em qualquer objeto na pré-visualização acima para</div>
<div class="t " style="left:517px;top:214.0px;">alterar o modelo!</div>
<svg class="a" style="left:517px;top:240px" width="264" height="121" viewBox="0 0 264 121">
<defs>
<filter id="mot" x="0" y="0" width="100%" height="100%"><feTurbulence type="fractalNoise" baseFrequency="0.13" numOctaves="2" seed="7" result="n"/><feColorMatrix in="n" type="matrix" values="0 0 0 0 0.55  0 0 0 0 0.53  0 0 0 0 0.5  2.4 0 0 0 -1.12"/><feComposite in2="SourceGraphic" operator="in"/></filter>
</defs>
<rect width="264" height="121" fill="#a3a3a3"/>
<polygon points="43,45.6 132.3,27.5 221.6,45.6 132.3,69.5" fill="#3d3b38"/>
<polygon points="43,45.6 132.3,69.5 132.3,106.8 43,78.7" fill="#4f4c49"/>
<polygon points="132.3,69.5 221.6,45.6 221.6,73.8 132.3,106.8" fill="#55524e"/>
<g filter="url(#mot)" opacity="0.5">
<polygon points="43,45.6 132.3,69.5 132.3,106.8 43,78.7" fill="#fff"/>
<polygon points="132.3,69.5 221.6,45.6 221.6,73.8 132.3,106.8" fill="#fff"/>
</g>
<g filter="url(#mot)" opacity="0.22"><polygon points="43,45.6 132.3,27.5 221.6,45.6 132.3,69.5" fill="#fff"/></g>
<polyline points="43,45.6 132.3,69.5 221.6,45.6" fill="none" stroke="#6a6763" stroke-width="0.6"/>
<path d="M0 121 V0.6 H264" fill="none" stroke="#8a8a8a" stroke-width="1.6"/>
<path d="M264 0 V120.5 H0" fill="none" stroke="#e4e4e4" stroke-width="1"/>
</svg>

<svg class="a" style="left:40px;top:218px" width="56" height="56" viewBox="0 0 56 56">
<circle cx="27.4" cy="27.5" r="22.3" fill="#5bb870" fill-opacity="0.7"/>
<path d="M20.4 17.4 V35.6 L24.6 31.8 L27.8 38.8 L30.5 37.6 L27.4 30.6 L33.9 30.6 Z" fill="#fff" stroke="#1a1a1a" stroke-width="1.1" stroke-linejoin="round"/>
</svg>

</body></html>
